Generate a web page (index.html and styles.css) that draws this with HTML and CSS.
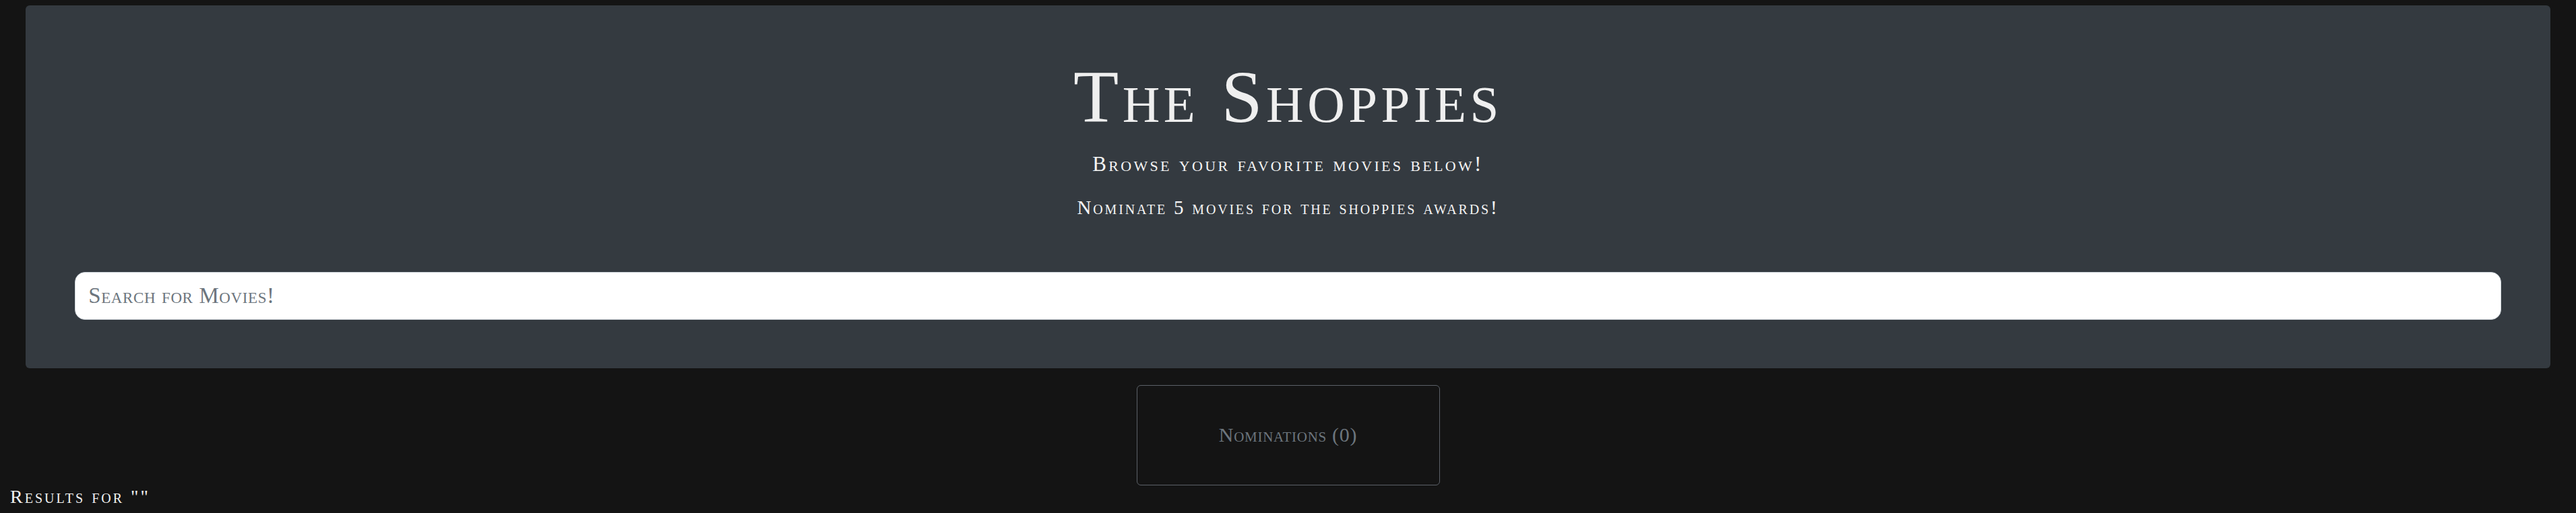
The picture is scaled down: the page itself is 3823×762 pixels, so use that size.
FILE: index.html
```html
<!DOCTYPE html>
<html lang="en">
<head>
<meta charset="utf-8">
<title>The Shoppies</title>
<link rel="stylesheet" href="styles.css">
</head>
<body>
<header class="jumbotron">
  <h1 class="title">The Shoppies</h1>
  <p class="lead">Browse your favorite movies below!</p>
  <p class="lead lead-second">Nominate 5 movies for the shoppies awards!</p>
  <input class="search" type="text" placeholder="Search for Movies!">
</header>
<section class="nominations">
  <div class="nom-box">Nominations (0)</div>
</section>
<h5 class="results">Results for ""</h5>
</body>
</html>
```

FILE: styles.css
```css
html, body {
  margin: 0;
  padding: 0;
}
body {
  background: #141414;
  font-family: "Liberation Serif", "Times New Roman", serif;
  font-variant: small-caps;
  color: #f2f2f2;
}
.jumbotron {
  width: 98%;
  box-sizing: border-box;
  margin: 8px auto 0;
  background: #343a40;
  border-radius: 6px;
  padding: 70px 73px 72px;
  display: flex;
  flex-direction: column;
  align-items: center;
}
.title {
  margin: 0;
  font-size: 110px;
  font-weight: normal;
  line-height: 1.2;
  color: #efefef;
  letter-spacing: 5.5px;
}
.lead {
  margin: 15px 0 0;
  font-size: 31px;
  line-height: 1.2;
  letter-spacing: 3.3px;
  color: #f5f5f5;
}
.lead-second {
  margin-top: 29px;
  font-size: 29px;
  letter-spacing: 2.8px;
}
.search {
  margin-top: 78px;
  align-self: stretch;
  box-sizing: border-box;
  height: 71px;
  border: 1px solid #ced4da;
  border-radius: 15px;
  background: #fff;
  padding: 0 19px;
  font-family: inherit;
  font-variant: small-caps;
  font-size: 33px;
  letter-spacing: 0.6px;
  color: #495057;
  outline: none;
}
.search::placeholder {
  color: #6c757d;
  opacity: 1;
}
.nominations {
  display: flex;
  justify-content: center;
  margin-top: 25px;
}
.nom-box {
  width: 450px;
  height: 149px;
  box-sizing: border-box;
  border: 1px solid #5c6168;
  border-radius: 6px;
  display: flex;
  align-items: center;
  justify-content: center;
  font-size: 30px;
  letter-spacing: 0.7px;
  color: #6c757d;
}
.results {
  margin: 0;
  padding-left: 15px;
  font-size: 28px;
  font-weight: normal;
  line-height: 1.2;
  letter-spacing: 3px;
  color: #f2f2f2;
}
```
